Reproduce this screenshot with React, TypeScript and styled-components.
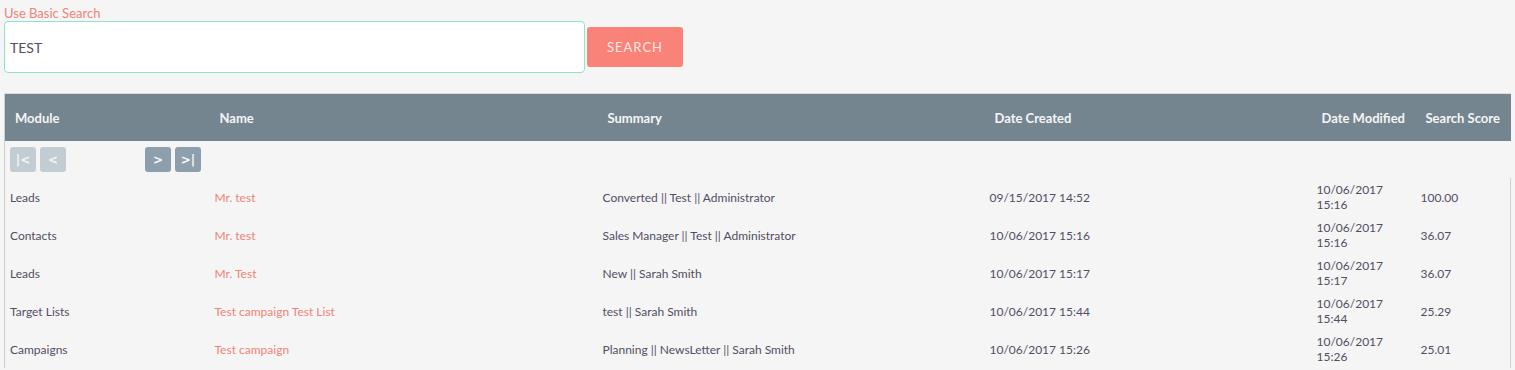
import styled, { createGlobalStyle } from "styled-components";

const GlobalStyle = createGlobalStyle`
    body {
        margin: 0;
        background: #f5f5f5;
        font-family: Lato, "Liberation Sans", sans-serif;
        color: #534d64;
    }
`;

type Row = {
    module: string;
    name: string;
    summary: string;
    created: string;
    modifiedDate: string;
    modifiedTime: string;
    score: string;
};

const rows: Row[] = [
    {module: "Leads", name: "Mr. test", summary: "Converted || Test || Administrator", created: "09/15/2017 14:52", modifiedDate: "10/06/2017", modifiedTime: "15:16", score: "100.00"},
    {module: "Contacts", name: "Mr. test", summary: "Sales Manager || Test || Administrator", created: "10/06/2017 15:16", modifiedDate: "10/06/2017", modifiedTime: "15:16", score: "36.07"},
    {module: "Leads", name: "Mr. Test", summary: "New || Sarah Smith", created: "10/06/2017 15:17", modifiedDate: "10/06/2017", modifiedTime: "15:17", score: "36.07"},
    {module: "Target Lists", name: "Test campaign Test List", summary: "test || Sarah Smith", created: "10/06/2017 15:44", modifiedDate: "10/06/2017", modifiedTime: "15:44", score: "25.29"},
    {module: "Campaigns", name: "Test campaign", summary: "Planning || NewsLetter || Sarah Smith", created: "10/06/2017 15:26", modifiedDate: "10/06/2017", modifiedTime: "15:26", score: "25.01"},
];

const columns = [
    {label: "Module", width: 205},
    {label: "Name", width: 388},
    {label: "Summary", width: 387},
    {label: "Date Created", width: 327},
    {label: "Date Modified", width: 104},
    {label: "Search Score", width: 95},
];

export default function App() {
    return (
        <Page>
            <GlobalStyle/>
            <SearchForm>
                <BasicLink>Use Basic Search</BasicLink>
                <SearchRow>
                    <SearchInput defaultValue="TEST"/>
                    <SearchButton>Search</SearchButton>
                </SearchRow>
            </SearchForm>

            <ResultsTable>
                <colgroup>
                    {columns.map(c => <col key={c.label} style={{width: c.width}}/>)}
                </colgroup>
                <thead>
                <tr>
                    {columns.map(c => <HeadCell key={c.label}>{c.label}</HeadCell>)}
                </tr>
                </thead>
                <tbody>
                <PagerRow>
                    <td colSpan={6}>
                        <Pager>
                            <PageGroup>
                                <PageButton disabled>|&lt;</PageButton>
                                <PageButton disabled>&lt;</PageButton>
                            </PageGroup>
                            <PageGroup>
                                <PageButton>&gt;</PageButton>
                                <PageButton>&gt;|</PageButton>
                            </PageGroup>
                        </Pager>
                    </td>
                </PagerRow>
                {rows.map((r, i) => (
                    <DataRow key={i}>
                        <Cell>{r.module}</Cell>
                        <Cell><NameLink>{r.name}</NameLink></Cell>
                        <Cell>{r.summary}</Cell>
                        <Cell>{r.created}</Cell>
                        <Cell>{r.modifiedDate}<br/>{r.modifiedTime}</Cell>
                        <Cell>{r.score}</Cell>
                    </DataRow>
                ))}
                </tbody>
            </ResultsTable>
        </Page>
    );
}

const Page = styled.div`
    padding: 6px 3px 0 4px;
`

const SearchForm = styled.div`
    display: flex;
    flex-direction: column;
    margin-bottom: 20px;
`

const BasicLink = styled.a`
    color: #f08377;
    font-size: 13px;
    line-height: 15px;
    cursor: pointer;
`

const SearchRow = styled.div`
    display: flex;
    align-items: center;
    gap: 2px;
`

const SearchInput = styled.input`
    box-sizing: border-box;
    width: 581px;
    height: 52px;
    border: 1px solid #8fe3cd;
    border-radius: 4px;
    background: #fff;
    padding: 0 5px;
    font-family: Lato, "Liberation Sans", sans-serif;
    font-size: 14px;
    color: #534d64;
    outline: none;
`

const SearchButton = styled.button`
    width: 96px;
    height: 40px;
    border: none;
    border-radius: 3px;
    background: #f98378;
    color: #fde8e5;
    font-family: Lato, "Liberation Sans", sans-serif;
    font-size: 13px;
    letter-spacing: 1px;
    text-transform: uppercase;
    cursor: pointer;
`

const ResultsTable = styled.table`
    table-layout: fixed;
    width: 1507px;
    border-collapse: collapse;
    border-top: 1px solid #dcdcdc;
    border-left: 1px solid #cfcfcf;
`

const HeadCell = styled.th`
    background: #748590;
    color: #f5f5f5;
    font-size: 13px;
    font-weight: 700;
    text-align: left;
    height: 47px;
    padding: 0 0 0 10px;
    white-space: nowrap;
`

const PagerRow = styled.tr`
    td {
        height: 37px;
        padding: 0 5px;
    }
`

const Pager = styled.div`
    display: flex;
    gap: 79px;
`

const PageGroup = styled.div`
    display: flex;
    gap: 4px;
`

const PageButton = styled.button`
    width: 26px;
    height: 25px;
    border: none;
    border-radius: 3px;
    padding: 0;
    background: ${p => p.disabled ? "#c2ccd3" : "#8d9fac"};
    color: #f5f5f5;
    font-family: "DejaVu Sans", Lato, sans-serif;
    font-size: 12px;
    font-weight: 700;
`

const DataRow = styled.tr`
    border-right: 1px solid #cfcfcf;
`

const Cell = styled.td`
    height: 38px;
    padding: 0 5px;
    font-size: 12px;
    line-height: 15px;
    color: #534d64;
    vertical-align: middle;
`

const NameLink = styled.a`
    color: #f08377;
    cursor: pointer;
`
